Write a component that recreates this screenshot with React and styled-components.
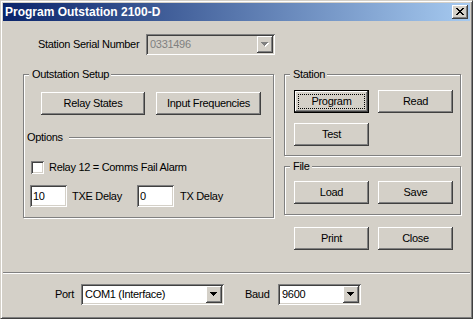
import React from "react";
import styled, { createGlobalStyle, css } from "styled-components";

const GlobalStyle = createGlobalStyle`
  html, body {
    margin: 0;
    padding: 0;
    background: #d4d0c8;
  }
  body {
    font-family: "Liberation Sans", Arial, sans-serif;
    font-size: 11px;
    line-height: 13px;
    letter-spacing: -0.3px;
    color: #000;
  }
`;

const raised = css`
  background: #d4d0c8;
  box-shadow: inset -1px -1px #404040, inset 1px 1px #ffffff,
    inset -2px -2px #808080, inset 2px 2px #d4d0c8;
`;

const sunken = css`
  box-shadow: inset 1px 1px #808080, inset -1px -1px #ffffff,
    inset 2px 2px #404040, inset -2px -2px #d4d0c8;
`;

const Window = styled.div`
  box-sizing: border-box;
  width: 473px;
  height: 319px;
  border: 1px solid;
  border-color: #d4d0c8 #404040 #404040 #d4d0c8;
  box-shadow: inset 1px 1px #ffffff, inset -1px -1px #808080;
  padding: 2px;
  display: flex;
  flex-direction: column;
  background: #d4d0c8;
`;

const TitleBar = styled.div`
  height: 18px;
  display: flex;
  align-items: center;
  justify-content: space-between;
  padding: 0 2px 0 2px;
  background: linear-gradient(to right, #0a246a, #a6caf0);
`;

const Title = styled.span`
  color: #fff;
  font-weight: bold;
  font-size: 12px;
  letter-spacing: 0;
`;

const CloseBox = styled.div`
  ${raised}
  box-sizing: border-box;
  width: 16px;
  height: 14px;
  padding: 3px 0 0 4px;
  display: flex;
  align-items: flex-start;
`;

const Client = styled.div`
  flex: 1;
  display: flex;
  flex-direction: column;
`;

const SerialRow = styled.div`
  display: flex;
  align-items: center;
  margin-top: 13px;
  padding-left: 35px;
`;

const FieldLabel = styled.span`
  width: ${(p) => p.$w}px;
  margin-left: ${(p) => p.$ml || 0}px;
  flex: none;
  white-space: nowrap;
`;

const ComboBox = styled.div`
  ${sunken}
  box-sizing: border-box;
  width: ${(p) => p.$w}px;
  height: 21px;
  padding: 2px;
  display: flex;
  background: ${(p) => (p.$disabled ? "#d4d0c8" : "#ffffff")};
  color: ${(p) => (p.$disabled ? "#808080" : "#000")};
`;

const ComboText = styled.span`
  flex: 1;
  padding-left: 2px;
  line-height: 17px;
  white-space: nowrap;
`;

const DropButton = styled.span`
  ${raised}
  width: 16px;
  height: 17px;
  display: flex;
  align-items: center;
  justify-content: center;
`;

const Panels = styled.div`
  display: flex;
  align-items: flex-start;
  gap: 10px;
  margin-top: 19px;
  padding-left: 20px;
`;

const Group = styled.div`
  position: relative;
  box-sizing: border-box;
  width: ${(p) => p.$w}px;
  height: ${(p) => p.$h}px;
  margin-top: ${(p) => p.$mt || 0}px;
  border: 1px solid #808080;
  box-shadow: inset 1px 1px #ffffff, 1px 1px #ffffff;
  padding: ${(p) => p.$pad};
`;

const Legend = styled.span`
  position: absolute;
  top: -7px;
  left: 5px;
  padding: 0 2px 0 3px;
  background: #d4d0c8;
  white-space: nowrap;
`;

const ButtonRow = styled.div`
  display: flex;
  gap: ${(p) => p.$gap}px;
  padding-left: ${(p) => p.$pl}px;
  margin-top: ${(p) => p.$mt || 0}px;
`;

const ButtonGrid = styled.div`
  display: grid;
  grid-template-columns: 75px 75px;
  column-gap: 9px;
  row-gap: 10px;
`;

const Button = styled.button`
  ${raised}
  position: relative;
  box-sizing: border-box;
  width: ${(p) => p.$w || 75}px;
  height: 23px;
  border: none;
  padding: 0 0 1px;
  font: inherit;
  letter-spacing: inherit;
  color: #000;
  white-space: nowrap;
  ${(p) =>
    p.$default &&
    css`
      border: 1px solid #000;
      &::after {
        content: "";
        position: absolute;
        inset: 3px;
        border: 1px dotted #000;
      }
    `}
`;

const OptionsRow = styled.div`
  display: flex;
  align-items: center;
  height: 13px;
  margin-top: 16px;
  padding-left: 3px;
`;

const Rule = styled.div`
  flex: 1;
  height: 0;
  margin: 0 2px 0 6px;
  border-top: 1px solid #808080;
  border-bottom: 1px solid #ffffff;
`;

const CheckRow = styled.div`
  display: flex;
  align-items: center;
  margin-top: 17px;
  padding-left: 7px;
`;

const CheckBox = styled.span`
  ${sunken}
  width: 13px;
  height: 13px;
  background: #fff;
  margin-right: 5px;
`;

const EditRow = styled.div`
  display: flex;
  align-items: center;
  margin-top: 11px;
  padding-left: 6px;
`;

const Edit = styled.div`
  ${sunken}
  box-sizing: border-box;
  width: 37px;
  height: 22px;
  padding: 0 3px;
  background: #fff;
  line-height: 22px;
`;

const RightColumn = styled.div`
  display: flex;
  flex-direction: column;
`;

const Separator = styled.div`
  margin-top: 22px;
  border-top: 1px solid #808080;
  border-bottom: 1px solid #ffffff;
`;

const PortRow = styled.div`
  display: flex;
  align-items: center;
  margin-top: 10px;
  padding-left: 52px;
`;

const CloseGlyph = () => (
  <svg width="8" height="7" viewBox="0 0 8 7" shapeRendering="crispEdges">
    <path
      fill="#000"
      d="M0 0h2v1H0z M6 0h2v1H6z M1 1h2v1H1z M5 1h2v1H5z M2 2h4v1H2z M3 3h2v1H3z M2 4h4v1H2z M1 5h2v1H1z M5 5h2v1H5z M0 6h2v1H0z M6 6h2v1H6z"
    />
  </svg>
);

const arrow = "M0 0h7v1H0z M1 1h5v1H1z M2 2h3v1H2z M3 3h1v1H3z";

const DropArrow = ({ disabled }) => (
  <svg width="8" height="5" viewBox="0 0 8 5" shapeRendering="crispEdges">
    {disabled && <path fill="#fff" transform="translate(1 1)" d={arrow} />}
    <path fill={disabled ? "#808080" : "#000"} d={arrow} />
  </svg>
);

const Combo = ({ w, value, disabled }) => (
  <ComboBox $w={w} $disabled={disabled}>
    <ComboText>{value}</ComboText>
    <DropButton>
      <DropArrow disabled={disabled} />
    </DropButton>
  </ComboBox>
);

export default function App() {
  return (
    <>
      <GlobalStyle />
      <Window>
        <TitleBar>
          <Title>Program Outstation 2100-D</Title>
          <CloseBox>
            <CloseGlyph />
          </CloseBox>
        </TitleBar>
        <Client>
          <SerialRow>
            <FieldLabel $w={108}>Station Serial Number</FieldLabel>
            <Combo w={129} value="0331496" disabled />
          </SerialRow>

          <Panels>
            <Group $w={251} $h={144} $pad="0">
              <Legend>Outstation Setup</Legend>
              <ButtonRow $gap={11} $pl={17} $mt={17}>
                <Button $w={104}>Relay States</Button>
                <Button $w={105}>Input Frequencies</Button>
              </ButtonRow>
              <OptionsRow>
                <span>Options</span>
                <Rule />
              </OptionsRow>
              <CheckRow>
                <CheckBox />
                <span>Relay 12 = Comms Fail Alarm</span>
              </CheckRow>
              <EditRow>
                <Edit>10</Edit>
                <FieldLabel $w={65} $ml={5}>TXE Delay</FieldLabel>
                <Edit>0</Edit>
                <FieldLabel $w={50} $ml={6}>TX Delay</FieldLabel>
              </EditRow>
            </Group>

            <RightColumn>
              <Group $w={177} $h={82} $pad="15px 0 0 9px">
                <Legend>Station</Legend>
                <ButtonGrid>
                  <Button $default>Program</Button>
                  <Button>Read</Button>
                  <Button>Test</Button>
                </ButtonGrid>
              </Group>
              <Group $w={177} $h={49} $mt={10} $pad="14px 0 0 9px">
                <Legend>File</Legend>
                <ButtonGrid>
                  <Button>Load</Button>
                  <Button>Save</Button>
                </ButtonGrid>
              </Group>
              <ButtonRow $gap={9} $pl={10} $mt={12}>
                <Button>Print</Button>
                <Button>Close</Button>
              </ButtonRow>
            </RightColumn>
          </Panels>

          <Separator />

          <PortRow>
            <FieldLabel $w={26}>Port</FieldLabel>
            <Combo w={143} value="COM1 (Interface)" />
            <FieldLabel $w={33} $ml={21}>Baud</FieldLabel>
            <Combo w={83} value="9600" />
          </PortRow>
        </Client>
      </Window>
    </>
  );
}
